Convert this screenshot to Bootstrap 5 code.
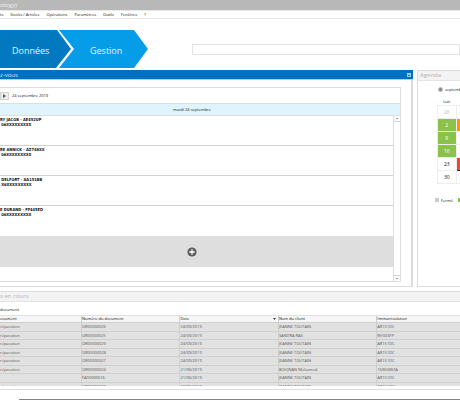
<!DOCTYPE html>
<html lang="fr">
<head>
<meta charset="utf-8">
<meta name="viewport" content="width=device-width, initial-scale=1">
<title>Rendez-vous</title>
<link href="https://cdn.jsdelivr.net/npm/bootstrap@5.3.0/dist/css/bootstrap.min.css" rel="stylesheet">
<style>
html, body { overflow: hidden; }
body { font: 4px/5px "Open Sans", "Noto Sans", sans-serif; color: #111; min-height: 100vh; }
button, input { font: inherit; color: inherit; }
.titlebar { height: 10px; background: #b8b8b8; color: #f0f0f0; font-size: 6px; line-height: 11px; }
.menubar { height: 9px; gap: 7px; border: solid #e8e8e8; border-width: 1px 0; }
.menubar a { color: #111; line-height: 7px; }
.banner { height: 51px; padding: 11px 0 2px; }
.steps { width: 150px; height: 38px; }
.steps text { font: 9px "Open Sans", sans-serif; fill: #e8f5fd; }
.search-box { height: 11px; margin-left: 42px; border: 1px solid #e2e2e2; padding: 0 2px; outline: 0; min-width: 0; }
.work { height: 217px; gap: 4px; }
.pane { border: 1px solid #dcdcdc; background: #fff; min-width: 0; }
.pane-left { border-left: 0; border-top: 0; border-right-width: 2px; }
.pane-side { flex: 0 0 43px; border-right: 0; overflow: hidden; }
.bar { height: 10px; font-size: 6px; line-height: 10px; margin: 0; font-weight: 400; }
.bar-blue { background: #0070c0; color: #d8eaf7; border-bottom: 1px solid #a9d0ec; margin-right: -2px; }
.bar-blue button { width: 4px; height: 4px; padding: 0; border: 1px solid #9fd0f3; border-top-width: 2px; background: none; margin-right: 2px; }
.bar-grey { background: #f3f3f3; color: #b4b4b4; border-bottom: 1px solid #e4e4e4; line-height: 9px; }
.pane-side .bar { padding-left: 2px; }
.day-box { margin: 7px 10px 4px 0; border: 1px solid #dedede; border-left: 0; flex: 1; min-height: 0; }
.date-row { height: 16px; gap: 3px; border-bottom: 1px solid #dedede; }
.next-btn { width: 9px; height: 8px; border: 1px solid #d2d2d2; background: #eee; padding: 0; line-height: 0; }
.day-title { height: 12px; line-height: 11px; background: #e0f4fd; border-bottom: 1px solid #dedede; padding-right: 16px; }
.slot { height: 30px; border-bottom: 1px solid #d2d2d2; font-family: "DejaVu Sans Condensed", "DejaVu Sans", sans-serif; font-weight: 700; padding-top: 1px; white-space: pre; }
.slot-add { height: 31px; background: #dedede; border: 0; padding: 0 9px 0 0; }
.scroll { width: 7px; border-left: 1px solid #dedede; }
.scroll button { height: 6px; border: solid #d6d6d6; border-width: 0 0 1px; background: #fbfbfb; padding: 0; line-height: 0; }
.scroll button:last-child { border-width: 1px 0 0; }
.month { height: 17px; padding-left: 20px; gap: 2px; white-space: nowrap; }
.month input { appearance: none; flex: none; width: 5px; height: 5px; margin: 0; border: 1px solid #bbb; border-radius: 50%; background: #888; }
.cal { margin-left: 19px; width: 75px; table-layout: fixed; border-collapse: collapse; text-align: center; }
.cal th { height: 7px; font-weight: 400; padding: 0; }
.cal td { height: 13px; padding: 0; border: 1px solid #eee; font-size: 5px; line-height: 6px; }
.cal .off { color: #bbb; }
.cal .open { background: #8bc34a; color: #fff; }
.cal .part { background: #ff9800; color: #fff; }
.cal .today { background: #f44336; border: 1px solid #333; color: #fff; }
.legend-row { margin: 14px 0 0 17px; gap: 5px; white-space: nowrap; }
.key { width: 4px; height: 4px; margin-right: 2px; background: #ccc; }
.key-open { background: #8bc34a; }
.docs { margin-top: 4px; height: 99px; border-width: 1px 0; overflow: hidden; }
.docs-tab { height: 13px; padding-top: 5px; }
.docs-clip { height: 71px; overflow: hidden; background: #e1e1e1; border-top: 1px solid #e0e0e0; }
.grid-docs { width: 100%; table-layout: fixed; border-collapse: separate; border-spacing: 0; color: #555; }
.grid-docs th, .grid-docs td { padding: 0; border: solid #cfcfcf; border-width: 0 0 1px 1px; white-space: nowrap; line-height: 7px; height: 8px; }
.grid-docs th { font-weight: 400; background: #f6f6f6; color: #111; height: 7px; line-height: 6px; }
.grid-docs th:first-child, .grid-docs td:first-child { border-left: 0; }
.grid-docs tbody tr:nth-child(odd) td { height: 9px; line-height: 8px; }
.c-type { width: 81px; } .c-num, .c-date, .c-name { width: 21.4%; }
.sort { width: 3px; height: 2px; margin: 2px 2px 0 0; }
.taskbar { height: 1px; background: #858585; margin: 9px 0 0 19px; }
</style>
<script src="https://cdn.jsdelivr.net/npm/bootstrap@5.3.0/dist/js/bootstrap.bundle.min.js"></script>
</head>
<body class="bg-white">
<header>
  <div class="titlebar">ology)</div>
  <nav class="menubar d-flex">
    <a class="text-decoration-none" href="#">ts</a>
    <a class="text-decoration-none" href="#">Stocks / Articles</a>
    <a class="text-decoration-none" href="#">Opérations</a>
    <a class="text-decoration-none" href="#">Paramètres</a>
    <a class="text-decoration-none" href="#">Outils</a>
    <a class="text-decoration-none" href="#">Fenêtres</a>
    <a class="text-decoration-none" href="#">?</a>
  </nav>
  <div class="banner d-flex align-items-center">
    <svg class="steps flex-shrink-0" viewBox="0 0 150 38">
      <path d="M0 0H57L71 19 56 38H0z" fill="#0079c1"/>
      <path d="M59 0H134L148 19 134 38H59L74 19z" fill="#059ce8"/>
      <text x="12" y="24">Données</text>
      <text x="90" y="24">Gestion</text>
    </svg>
    <input class="search-box flex-grow-1 rounded-0" type="search" aria-label="Rechercher">
  </div>
</header>
<main>
  <div class="work d-flex">
    <section class="pane pane-left flex-grow-1 d-flex flex-column">
      <h2 class="bar bar-blue d-flex justify-content-between align-items-center"><span>z-vous</span><button type="button" aria-label="Agrandir"></button></h2>
      <div class="day-box d-flex flex-column">
        <div class="date-row d-flex align-items-center">
          <button class="next-btn" type="button" aria-label="Jour suivant"><svg width="3" height="4" viewBox="0 0 3 4"><path d="M0 0L3 2 0 4z" fill="#555"/></svg></button>
          <span>24 septembre 2019</span>
        </div>
        <div class="day-title text-center">mardi 24 septembre</div>
        <div class="d-flex flex-grow-1">
          <div class="flex-grow-1">
            <div class="slot">RY JACOB - AE452UP<br> 06XXXXXXXXX</div>
            <div class="slot">RE ANNICK - AZ748XX<br> 06XXXXXXXXX</div>
            <div class="slot"> DELFORT - AA151BB<br> X6XXXXXXXXX</div>
            <div class="slot border-0">E DURAND - FF445ED<br> 06XXXXXXXXX</div>
            <button class="slot-add w-100 d-flex align-items-center justify-content-center" type="button" aria-label="Ajouter"><svg width="10" height="10" viewBox="0 0 10 10"><circle cx="5" cy="5" r="4.6" fill="#5c5c5c"/><path d="M5 2.3V7.7M2.3 5H7.7" stroke="#fff" stroke-width="1.3"/></svg></button>
          </div>
          <div class="scroll d-flex flex-column justify-content-between">
            <button type="button" aria-label="Haut"><svg width="2" height="1" viewBox="0 0 2 1"><path d="M0 0H2V1H0z" fill="#999"/></svg></button>
            <button type="button" aria-label="Bas"><svg width="2" height="1" viewBox="0 0 2 1"><path d="M0 0H2V1H0z" fill="#999"/></svg></button>
          </div>
        </div>
      </div>
    </section>
    <section class="pane pane-side">
      <h2 class="bar bar-grey">Agenda</h2>
      <div class="month d-flex align-items-center"><input type="radio" id="m9" checked><label for="m9">septembre</label></div>
      <table class="cal">
        <thead><tr><th>Lun</th><th></th><th></th><th></th></tr></thead>
        <tbody>
          <tr><td class="off">26</td><td></td><td></td><td></td></tr>
          <tr><td class="open">2</td><td class="part"></td><td></td><td></td></tr>
          <tr><td class="open">9</td><td></td><td></td><td></td></tr>
          <tr><td class="open">16</td><td></td><td></td><td></td></tr>
          <tr><td>23</td><td class="today"></td><td></td><td></td></tr>
          <tr><td>30</td><td></td><td></td><td></td></tr>
        </tbody>
      </table>
      <div class="legend-row d-flex">
        <span class="d-flex align-items-center"><i class="key"></i>Fermé</span>
        <span class="d-flex align-items-center"><i class="key key-open"></i></span>
      </div>
    </section>
  </div>
  <section class="pane docs">
    <h2 class="bar bar-grey">s en cours</h2>
    <div class="docs-tab">document</div>
    <div class="docs-clip">
      <table class="grid-docs">
        <colgroup><col class="c-type"><col class="c-num"><col class="c-date"><col class="c-name"><col></colgroup>
        <thead><tr><th>ocument</th><th>Numéro du document</th><th><div class="d-flex justify-content-between">Date<svg class="sort" viewBox="0 0 3 2"><path d="M0 0H3L1.5 2z" fill="#444"/></svg></div></th><th>Nom du client</th><th>Immatriculation</th></tr></thead>
        <tbody>
          <tr><td>réparation</td><td>OR00000026</td><td>24/09/2019</td><td>JEANNE TOUTAIN</td><td>AR151DC</td></tr>
          <tr><td>réparation</td><td>OR00000025</td><td>24/09/2019</td><td>SANDRA RAS</td><td>RH333FP</td></tr>
          <tr><td>réparation</td><td>OR00000029</td><td>24/09/2019</td><td>JEANNE TOUTAIN</td><td>AR151DC</td></tr>
          <tr><td>réparation</td><td>OR00000028</td><td>24/09/2019</td><td>JEANNE TOUTAIN</td><td>AR151DC</td></tr>
          <tr><td>réparation</td><td>OR00000027</td><td>24/09/2019</td><td>JEANNE TOUTAIN</td><td>AR151DC</td></tr>
          <tr><td>réparation</td><td>OR00000024</td><td>21/06/2019</td><td>BOUJNAN Mohamed</td><td>1686GW2A</td></tr>
          <tr><td></td><td>FA00000016</td><td>21/06/2019</td><td>JEANNE TOUTAIN</td><td>AR151DC</td></tr>
          <tr><td>réparation</td><td>OR00000023</td><td>18/06/2019</td><td>JEANNE TOUTAIN</td><td>AR151DC</td></tr>
        </tbody>
      </table>
    </div>
  </section>
</main>
<footer class="taskbar"></footer>
</body>
</html>
